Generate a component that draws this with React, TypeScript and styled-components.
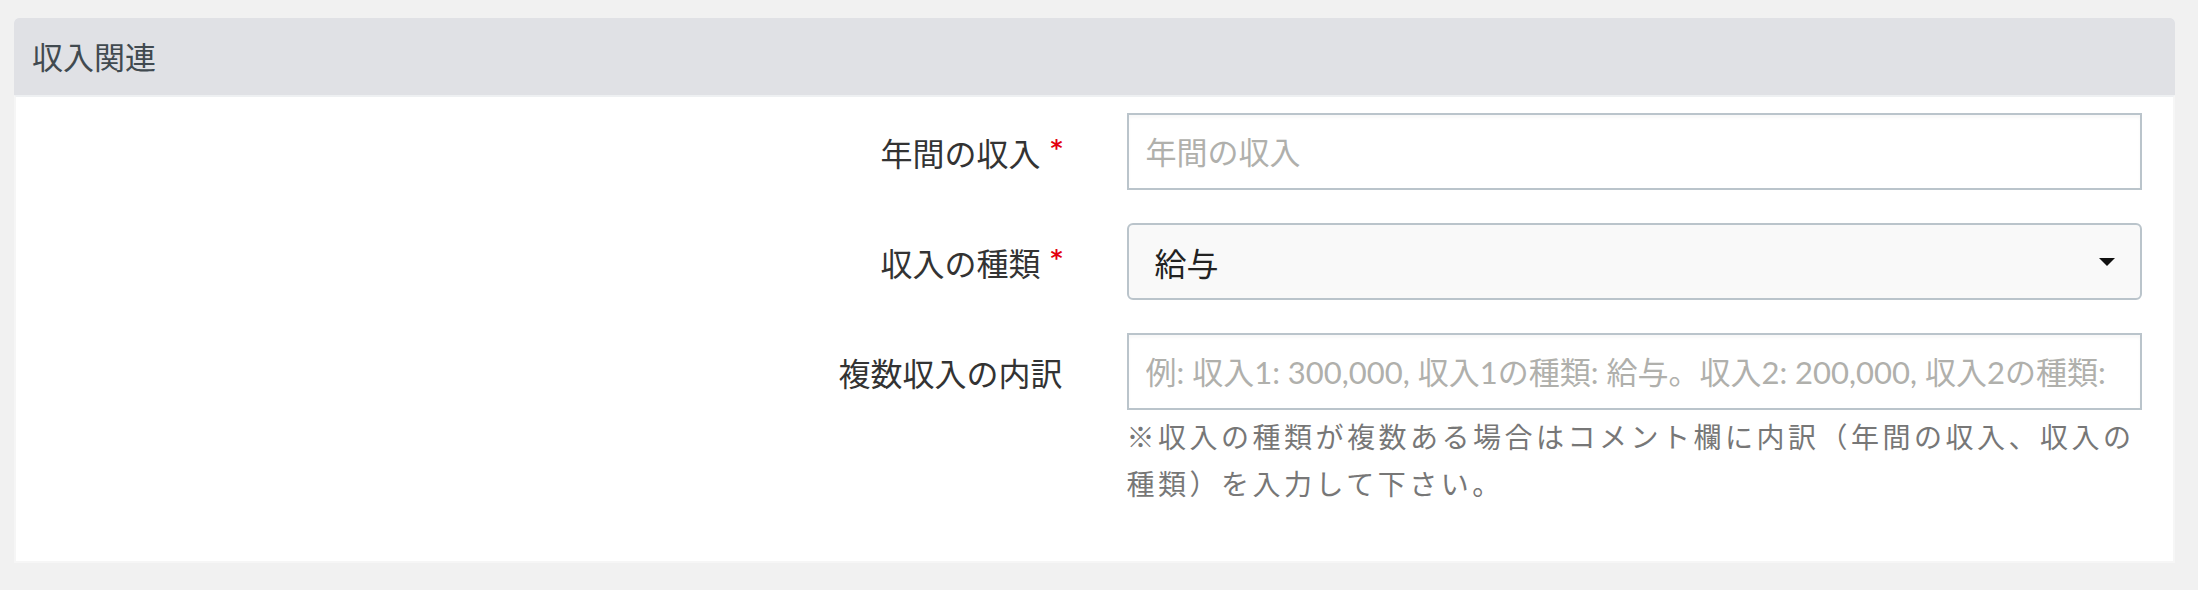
import styled, { createGlobalStyle } from 'styled-components';

const GlobalStyle = createGlobalStyle`
	html, body {
		margin: 0;
		padding: 0;
		background: #f1f1f1;
		font-family: 'Lato', 'Noto Sans CJK JP', sans-serif;
	}
`;

interface FieldRow {
	label: string;
	required?: boolean;
}

const App = (): JSX.Element => {
	return (
		<>
			<GlobalStyle />
			<Page>
				<Panel>
					<PanelHeader>収入関連</PanelHeader>
					<PanelBody>
						<Row>
							<Label label="年間の収入" required />
							<Control>
								<TextInput type="text" placeholder="年間の収入" />
							</Control>
						</Row>
						<Row>
							<Label label="収入の種類" required />
							<Control>
								<SelectBox>
									<span>給与</span>
									<Caret />
								</SelectBox>
							</Control>
						</Row>
						<Row>
							<Label label="複数収入の内訳" />
							<Control>
								<TextInput
									type="text"
									placeholder="例: 収入1: 300,000, 収入1の種類: 給与。収入2: 200,000, 収入2の種類:"
								/>
								<HelpText>
									※収入の種類が複数ある場合はコメント欄に内訳（年間の収入、収入の種類）を入力して下さい。
								</HelpText>
							</Control>
						</Row>
					</PanelBody>
				</Panel>
			</Page>
		</>
	);
};

export default App;

const Label = ({ label, required }: FieldRow) => (
	<LabelCell>
		<LabelText>{label}</LabelText>
		{required && <Required>*</Required>}
	</LabelCell>
);

const Page = styled.div`
	padding: 18px 23px 0 14px;
`;

const Panel = styled.section`
	background: #fff;
	border-radius: 5px 5px 0 0;
	overflow: hidden;
`;

const PanelHeader = styled.h2`
	margin: 0;
	height: 77px;
	display: flex;
	align-items: center;
	padding: 0 18px 3px;
	box-sizing: border-box;
	background: #e0e1e5;
	color: #414a50;
	font-family: 'Noto Sans CJK JP', sans-serif;
	font-size: 31px;
	font-weight: 400;
`;

const PanelBody = styled.div`
	border: 2px solid #f6f6f6;
	border-top-color: #eef0f2;
	padding: 16px 31px 54px;
	display: flex;
	flex-direction: column;
	gap: 33px;
`;

const Row = styled.div`
	display: grid;
	grid-template-columns: 1fr 1fr;
	column-gap: 64px;
	align-items: start;
`;

const LabelCell = styled.div`
	height: 77px;
	display: flex;
	align-items: center;
	justify-content: flex-end;
	gap: 10px;
`;

const LabelText = styled.span`
	font-family: 'Noto Sans CJK JP', sans-serif;
	font-size: 32px;
	color: #333;
`;

const Required = styled.span`
	color: #e3000f;
	font-family: 'DejaVu Sans', sans-serif;
	font-size: 23px;
	font-weight: 700;
	margin-top: -8px;
`;

const Control = styled.div`
	display: flex;
	flex-direction: column;
	min-width: 0;
`;

const TextInput = styled.input`
	height: 77px;
	box-sizing: border-box;
	width: 100%;
	border: 2px solid #bac4cb;
	border-radius: 0;
	padding: 0 17px;
	background: #fff;
	box-shadow: inset 0 3px 3px rgba(0, 0, 0, 0.03);
	font-family: 'Lato', 'Noto Sans CJK JP', sans-serif;
	font-size: 31px;
	color: #333;
	outline: none;

	&::placeholder {
		color: #b0b0ac;
		opacity: 1;
	}
`;

const SelectBox = styled.div`
	height: 77px;
	box-sizing: border-box;
	border: 2px solid #bac4cb;
	border-radius: 6px;
	background: #f9f9f9;
	display: flex;
	align-items: center;
	justify-content: space-between;
	padding: 0 25px 0 26px;
	font-family: 'Noto Sans CJK JP', sans-serif;
	font-size: 32px;
	color: #222;
`;

const Caret = styled.span`
	width: 0;
	height: 0;
	border-left: 8px solid transparent;
	border-right: 8px solid transparent;
	border-top: 8px solid #111;
`;

const HelpText = styled.p`
	margin: 3px 0 0;
	font-family: 'Noto Sans CJK JP', sans-serif;
	font-size: 28px;
	letter-spacing: 3.5px;
	line-height: 47px;
	color: #777;
`;
